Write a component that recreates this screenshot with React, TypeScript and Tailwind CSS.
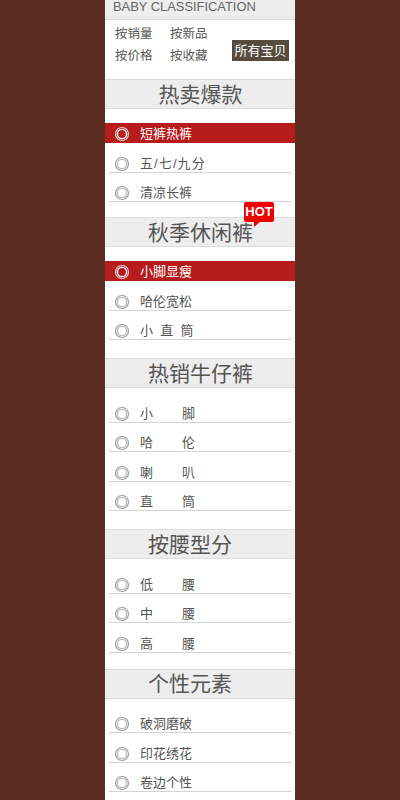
const FONT = "font-['Liberation_Sans','Noto_Sans_CJK_SC',sans-serif]";

function Radio({ active }: { active?: boolean }) {
  return (
    <svg width="16" height="16" viewBox="0 0 16 16" className="shrink-0">
      <circle cx="8" cy="8" r="6.5" fill="none" stroke={active ? "#f0cfcb" : "#9c9c9c"} strokeWidth="1.2" />
      <circle cx="8" cy="8" r="4.6" fill="none" stroke={active ? "#ffffff" : "#bdbdbd"} strokeWidth="1.4" />
    </svg>
  );
}

function Row({ label, active, wide }: { label: string; active?: boolean; wide?: boolean }) {
  if (active) {
    return (
      <div className="flex h-5 items-center gap-[10px] bg-[#b71c1c] pl-[9px] pt-[2px] text-[13px] leading-4 text-white">
        <Radio active />
        <span className="whitespace-pre">{label}</span>
      </div>
    );
  }
  return (
    <div className="mx-1 flex h-[29.5px] items-end gap-[10px] border-b border-[#d4d4d4] pl-[5px] text-[13px] leading-4 text-[#555]">
      <Radio />
      <span className={wide ? "whitespace-pre tracking-[1.1px]" : "whitespace-pre"}>{label}</span>
    </div>
  );
}

function Header({ title, hot, shift }: { title: string; hot?: boolean; shift?: boolean }) {
  return (
    <div
      className={
        shift
          ? "relative flex h-[30px] items-center justify-center border-y border-[#dcdcdc] bg-[#ededed] pr-[20px] pt-[1px] text-[21px] text-[#555]"
          : "relative flex h-[30px] items-center justify-center border-y border-[#dcdcdc] bg-[#ededed] pl-[1px] pt-[1px] text-[21px] text-[#555]"
      }
    >
      {title}
      {hot && (
        <div className="absolute left-[139px] top-[-16px] flex h-5 w-[30px] items-center justify-center rounded-[2px] bg-[#ee0000] pb-[1px] text-[13px] font-bold leading-none text-white">
          HOT
          <span className="absolute left-[10px] top-[19px] h-0 w-0 border-r-[7px] border-t-[6px] border-r-transparent border-t-[#ee0000]" />
        </div>
      )}
    </div>
  );
}

const sections = [
  { title: "秋季休闲裤", hot: true, top: "mt-[15px]", list: "pt-[14px]", rows: [["小脚显瘦", true], ["哈伦宽松"], ["小  直  筒"]] },
  { title: "热销牛仔裤", top: "mt-[18px]", list: "pt-[5px]", rows: [["小        脚"], ["哈        伦"], ["喇        叭"], ["直        筒"]] },
  { title: "按腰型分", shift: true, top: "mt-[18px]", list: "pt-[5px]", rows: [["低        腰"], ["中        腰"], ["高        腰"]] },
  { title: "个性元素", shift: true, top: "mt-[16px]", list: "pt-[5px]", rows: [["破洞磨破"], ["印花绣花"], ["卷边个性"]] },
];

export default function App() {
  return (
    <div className={`h-[800px] overflow-hidden bg-[#5c2e22] ${FONT}`}>
      <div className="mx-auto h-full w-[190px] bg-white">
        <div className="flex h-5 items-center border-b border-[#dcdcdc] bg-[#ededed] pb-[6px] pl-2 text-[12.9px] text-[#666]">
          BABY CLASSIFICATION
        </div>
        <div className="flex h-[59px] items-start pl-[10px] pt-[5px] text-[12.5px] text-[#555]">
          <div className="grid w-[117px] grid-cols-[55px_55px] gap-y-[4px] leading-[18px]">
            <span>按销量</span>
            <span>按新品</span>
            <span>按价格</span>
            <span>按收藏</span>
          </div>
          <div className="mt-[15px] flex h-[21px] w-[57px] items-center justify-center bg-[#574b3e] text-[13px] text-white">
            所有宝贝
          </div>
        </div>
        <Header title="热卖爆款" />
        <div className="pt-[14px]">
          <Row label="短裤热裤" active />
          <Row label="五/七/九分" wide />
          <Row label="清凉长裤" />
        </div>
        {sections.map((s) => (
          <div key={s.title} className={s.top}>
            <Header title={s.title} hot={s.hot} shift={s.shift} />
            <div className={s.list}>
              {s.rows.map((r) => (
                <Row key={r[0] as string} label={r[0] as string} active={!!r[1]} />
              ))}
            </div>
          </div>
        ))}
      </div>
    </div>
  );
}
